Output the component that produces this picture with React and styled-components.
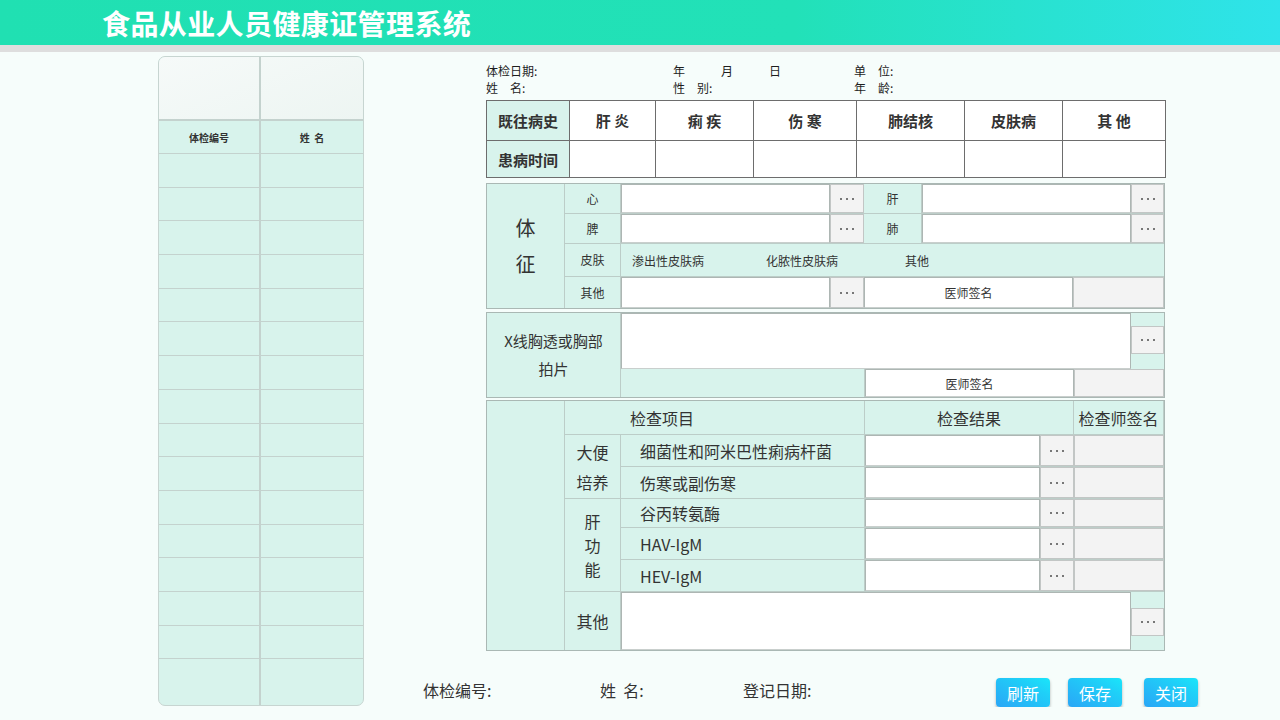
import styled, { createGlobalStyle } from "styled-components"

const GlobalStyle = createGlobalStyle`
  html, body {
    margin: 0;
    padding: 0;
  }
  body {
    background: #f6fdfb;
    font-family: "Noto Sans CJK SC", "Noto Sans", sans-serif;
    color: #333;
  }
  * {
    box-sizing: border-box;
  }
`

const MINT = "#d8f3ec"
const LINE = "#bccdc8"

const Header = styled.header`
  height: 52px;
  background: linear-gradient(90deg, #20e0b2 0%, #22e1b8 62%, #2fe3ea 100%);
  border-bottom: 7px solid #dedede;
  display: flex;
  align-items: center;
  padding-left: 102px;
`

const Title = styled.h1`
  margin: 0;
  font-size: 28px;
  letter-spacing: 0.4px;
  line-height: 40px;
  font-weight: bold;
  color: #fff;
`

const Main = styled.main`
  display: flex;
  padding: 4px 0 0 158px;
`

/* ---------- left list ---------- */

const SidePanel = styled.aside`
  width: 206px;
  height: 650px;
  border: 1px solid #c7d5d1;
  border-radius: 7px;
  overflow: hidden;
  display: flex;
  flex-direction: column;
  background: ${MINT};
`

const SideRow = styled.div`
  display: grid;
  grid-template-columns: 102px 1fr;
  flex: ${(p) => (p.$grow ? "1 1 auto" : `0 0 ${p.$h}px`)};
  border-bottom: ${(p) => (p.$last ? "none" : `${p.$bw || 1}px solid #c4d2ce`)};
  background: ${(p) => (p.$top ? "linear-gradient(160deg, #f6faf9, #edf5f2)" : "transparent")};
`

const SideCell = styled.div`
  display: flex;
  align-items: center;
  justify-content: center;
  font-size: 10px;
  font-weight: bold;
  color: #333;
  white-space: pre;
  &:first-child {
    border-right: 2px solid #c4d2ce;
  }
`

/* ---------- right form ---------- */

const RightArea = styled.div`
  display: flex;
  flex-direction: column;
`

const Form = styled.div`
  width: 680px;
  margin-left: 122px;
`

const Info = styled.div`
  margin-top: 6px;
  display: grid;
  grid-template-columns: 187px 181px 1fr;
  font-size: 12px;
  line-height: 17px;
  color: #1e1e1e;
`

const DateParts = styled.div`
  display: flex;
  gap: 36px;
`

const HistoryTable = styled.div`
  margin-top: 4px;
  display: grid;
  grid-template-columns: 83px 86px 98px 103px 108px 98px 103px;
  grid-template-rows: 40px 37px;
  border-top: 1px solid #6d6d6d;
  border-left: 1px solid #6d6d6d;
`

const HCell = styled.div`
  border-right: 1px solid #6d6d6d;
  border-bottom: 1px solid #6d6d6d;
  background: ${(p) => (p.$label ? MINT : "#fff")};
  display: flex;
  align-items: center;
  justify-content: center;
  font-size: 15px;
  font-weight: bold;
  color: #333;
  white-space: pre;
`

const Section = styled.div`
  margin-top: ${(p) => p.$mt}px;
  width: 679px;
  height: ${(p) => p.$h}px;
  display: flex;
  border: 1px solid #aab8b4;
  background: ${MINT};
`

const BigLabel = styled.div`
  width: ${(p) => p.$w}px;
  flex: 0 0 auto;
  border-right: 1px solid ${LINE};
  display: flex;
  flex-direction: column;
  align-items: center;
  justify-content: center;
  font-size: ${(p) => p.$fs || 20}px;
  line-height: ${(p) => p.$lh || 36}px;
  color: #333;
  text-align: center;
`

const Rows = styled.div`
  flex: 1;
  display: flex;
  flex-direction: column;
`

const Row = styled.div`
  display: flex;
  flex: ${(p) => (p.$h ? `0 0 ${p.$h}px` : "1 1 auto")};
  border-bottom: ${(p) => (p.$last ? "none" : `1px solid ${LINE}`)};
`

const Label = styled.div`
  width: ${(p) => p.$w}px;
  flex: 0 0 auto;
  border-right: 1px solid ${LINE};
  display: flex;
  flex-direction: column;
  align-items: ${(p) => (p.$left ? "flex-start" : "center")};
  justify-content: center;
  padding-left: ${(p) => p.$pl || 0}px;
  font-size: ${(p) => p.$fs || 12}px;
  line-height: ${(p) => p.$lh || 20}px;
  color: #333;
  white-space: pre;
`

const Input = styled.div`
  width: ${(p) => p.$w}px;
  flex: 0 0 auto;
  background: #fff;
  border: 1px solid #adb6b3;
  border-bottom-color: #c9cfcd;
  display: flex;
  align-items: center;
  justify-content: center;
  font-size: 12px;
  color: #333;
`

const Gray = styled.div`
  width: ${(p) => p.$w}px;
  flex: 0 0 auto;
  background: #f3f3f3;
  border: 1px solid #c2c6c5;
  display: flex;
  align-items: center;
  justify-content: center;
  gap: 4px;
`

const Dot = styled.span`
  width: 2px;
  height: 2px;
  background: #777;
`

const Options = styled.div`
  flex: 1;
  display: flex;
  align-items: center;
  padding-left: 11px;
  font-size: 12px;
  color: #333;
`

const Option = styled.span`
  width: ${(p) => (p.$w ? `${p.$w}px` : "auto")};
`

const Side = styled.div`
  width: ${(p) => p.$w}px;
  flex: 0 0 auto;
  display: flex;
  flex-direction: column;
`

const Pad = styled.div`
  flex: ${(p) => (p.$h ? `0 0 ${p.$h}px` : "1 1 auto")};
`

const Group = styled.div`
  display: flex;
  border-bottom: 1px solid ${LINE};
`

const Dots = ({ w = 34, h }) => (
  <Gray $w={w} style={h ? { flex: `0 0 ${h}px`, width: "auto" } : undefined}>
    <Dot />
    <Dot />
    <Dot />
  </Gray>
)

const ItemRow = ({ name, h, last }) => (
  <Row $h={h} $last={last}>
    <Label $w={244} $left $pl={19} $fs={16}>
      {name}
    </Label>
    <Input $w={175} />
    <Dots w={34} />
    <Gray $w={90} />
  </Row>
)

/* ---------- footer ---------- */

const Footer = styled.div`
  margin-top: 27px;
  padding-left: 59px;
  display: flex;
  align-items: center;
  height: 29px;
`

const FootLabel = styled.span`
  width: ${(p) => p.$w}px;
  font-size: 16px;
  color: #333;
  margin-top: -6px;
  white-space: pre;
`

const Buttons = styled.div`
  display: flex;
`

const Button = styled.button`
  width: 54px;
  height: 29px;
  margin-left: ${(p) => p.$ml || 0}px;
  border: none;
  border-radius: 4px;
  background: linear-gradient(30deg, #2aa6f6 0%, #1fd0f8 70%, #1ae6fa 100%);
  box-shadow: 0 2px 3px rgba(0, 0, 0, 0.3);
  color: #fff;
  font-family: inherit;
  font-size: 16px;
  padding: 0;
  cursor: pointer;
`

const sideRows = Array.from({ length: 15 })

export default function App() {
  return (
    <>
      <GlobalStyle />
      <Header>
        <Title>食品从业人员健康证管理系统</Title>
      </Header>
      <Main>
        <SidePanel>
          <SideRow $top $h={64} $bw={2}>
            <SideCell />
            <SideCell />
          </SideRow>
          <SideRow $h={33}>
            <SideCell>体检编号</SideCell>
            <SideCell>{"姓  名"}</SideCell>
          </SideRow>
          {sideRows.map((_, i) => (
            <SideRow key={i} $h={33.7}>
              <SideCell />
              <SideCell />
            </SideRow>
          ))}
          <SideRow $grow $last>
            <SideCell />
            <SideCell />
          </SideRow>
        </SidePanel>

        <RightArea>
          <Form>
            <Info>
              <span>体检日期:</span>
              <DateParts>
                <span>年</span>
                <span>月</span>
                <span>日</span>
              </DateParts>
              <span>单　位:</span>
              <span>姓　名:</span>
              <span>性　别:</span>
              <span>年　龄:</span>
            </Info>

            <HistoryTable>
              <HCell $label>既往病史</HCell>
              <HCell>肝 炎</HCell>
              <HCell>痢 疾</HCell>
              <HCell>伤 寒</HCell>
              <HCell>肺结核</HCell>
              <HCell>皮肤病</HCell>
              <HCell>其 他</HCell>
              <HCell $label>患病时间</HCell>
              <HCell />
              <HCell />
              <HCell />
              <HCell />
              <HCell />
              <HCell />
            </HistoryTable>

            <Section $mt={5} $h={126}>
              <BigLabel $w={78}>
                <span>体</span>
                <span>征</span>
              </BigLabel>
              <Rows>
                <Row $h={30}>
                  <Label $w={56}>心</Label>
                  <Input $w={209} />
                  <Dots />
                  <Label $w={58}>肝</Label>
                  <Input $w={209} />
                  <Dots w={33} />
                </Row>
                <Row $h={30}>
                  <Label $w={56}>脾</Label>
                  <Input $w={209} />
                  <Dots />
                  <Label $w={58}>肺</Label>
                  <Input $w={209} />
                  <Dots w={33} />
                </Row>
                <Row $h={33}>
                  <Label $w={56}>皮肤</Label>
                  <Options>
                    <Option $w={134}>渗出性皮肤病</Option>
                    <Option $w={139}>化脓性皮肤病</Option>
                    <Option>其他</Option>
                  </Options>
                </Row>
                <Row $last>
                  <Label $w={56}>其他</Label>
                  <Input $w={209} />
                  <Dots />
                  <Input $w={209}>医师签名</Input>
                  <Gray $w={91} />
                </Row>
              </Rows>
            </Section>

            <Section $mt={3} $h={86}>
              <BigLabel $w={134} $fs={15} $lh={28}>
                <span>X线胸透或胸部</span>
                <span>拍片</span>
              </BigLabel>
              <Rows>
                <Row $h={56} $last>
                  <Input $w={510} />
                  <Side $w={33}>
                    <Pad $h={13} />
                    <Dots h={28} />
                    <Pad />
                  </Side>
                </Row>
                <Row $last>
                  <Label $w={244} />
                  <Input $w={209}>医师签名</Input>
                  <Gray $w={90} />
                </Row>
              </Rows>
            </Section>

            <Section $mt={2} $h={251}>
              <BigLabel $w={78} />
              <Rows>
                <Row $h={34}>
                  <Label $w={300} $left $pl={65} $fs={16}>
                    检查项目
                  </Label>
                  <Label $w={209} $fs={16}>
                    检查结果
                  </Label>
                  <Label $w={90} $fs={16}>
                    检查师签名
                  </Label>
                </Row>
                <Group>
                  <Label $w={56} $fs={16} $lh={30}>
                    <span>大便</span>
                    <span>培养</span>
                  </Label>
                  <Rows>
                    <ItemRow name="细菌性和阿米巴性痢病杆菌" h={32} />
                    <ItemRow name="伤寒或副伤寒" h={31} last />
                  </Rows>
                </Group>
                <Group>
                  <Label $w={56} $fs={16} $lh={24}>
                    <span>肝</span>
                    <span>功</span>
                    <span>能</span>
                  </Label>
                  <Rows>
                    <ItemRow name="谷丙转氨酶" h={29} />
                    <ItemRow name="HAV-IgM" h={32} />
                    <ItemRow name="HEV-IgM" h={31} last />
                  </Rows>
                </Group>
                <Row $last>
                  <Label $w={56} $fs={16}>
                    其他
                  </Label>
                  <Input $w={510} />
                  <Side $w={33}>
                    <Pad $h={16} />
                    <Dots h={28} />
                    <Pad />
                  </Side>
                </Row>
              </Rows>
            </Section>
          </Form>

          <Footer>
            <FootLabel $w={177}>体检编号:</FootLabel>
            <FootLabel $w={143}>{"姓  名:"}</FootLabel>
            <FootLabel $w={253}>登记日期:</FootLabel>
            <Buttons>
              <Button>刷新</Button>
              <Button $ml={18}>保存</Button>
              <Button $ml={22}>关闭</Button>
            </Buttons>
          </Footer>
        </RightArea>
      </Main>
    </>
  )
}
